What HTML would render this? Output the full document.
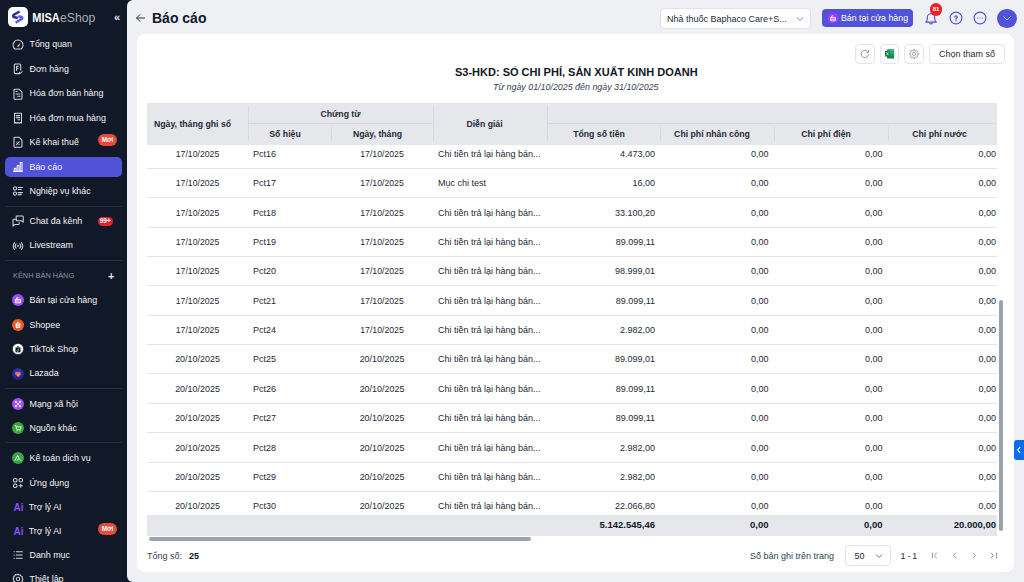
<!DOCTYPE html>
<html><head><meta charset="utf-8">
<style>
*{box-sizing:border-box;margin:0;padding:0}
html,body{width:1024px;height:582px;overflow:hidden;background:#111827;font-family:"Liberation Sans",sans-serif;}
.abs{position:absolute}
.t{position:absolute;white-space:nowrap}
#side{position:absolute;left:0;top:0;width:127px;height:582px;background:#111827;color:#f3f4f6}
#main{position:absolute;left:127px;top:0;width:897px;height:582px;background:#eef0f4;border-radius:6px 0 0 6px}
#card{position:absolute;left:137px;top:34px;width:877px;height:538px;background:#fff;border-radius:8px}
.nav{position:absolute;left:29.5px;font-size:8.9px;color:#f3f4f6;white-space:nowrap;line-height:10px}
.ico{position:absolute;left:12px;top:0}
.div{position:absolute;left:5px;width:117px;height:1px;background:#262d3d}
.badge{position:absolute;background:#e8453c;color:#fff;font-weight:bold;font-size:7px;border-radius:6px;text-align:center;line-height:10px}
.btn{position:absolute;top:44.2px;height:19.5px;border:1px solid #e3e5ea;border-radius:4px;background:#fff}
.th{position:absolute;font-size:8.7px;font-weight:bold;color:#1f2937;white-space:nowrap;line-height:10px;text-align:center}
.td{position:absolute;font-size:9px;color:#1f2937;white-space:nowrap;line-height:10px}
.r{text-align:right}
.vl{position:absolute;width:1px;background:#d6d9df}
.hl{position:absolute;height:1px;background:#e3e5e9}
</style></head>
<body>

<div id="side">
  <div class="abs" style="left:8px;top:7px;width:20px;height:20px;background:#fff;border-radius:5px"></div>
  <div class="abs" style="left:32.3px;top:11.7px;font-size:11px;font-weight:bold;color:#fff;line-height:13px;white-space:nowrap;transform:scaleY(1.1);transform-origin:0 70%">MISA<span style="font-weight:normal;color:#a9aeb8;font-size:12.2px;margin-left:.3px">eShop</span></div>
  <div class="abs" style="left:114px;top:10.5px;font-size:11px;color:#e5e7eb;font-weight:bold">«</div>
  <div class="abs" style="left:5px;top:157px;width:117px;height:19.5px;background:#5053d8;border-radius:5px"></div>
  <div class="nav" style="top:38.7px;">Tổng quan</div>
  <div class="nav" style="top:63.6px;">Đơn hàng</div>
  <div class="nav" style="top:87.8px;">Hóa đơn bán hàng</div>
  <div class="nav" style="top:112.6px;">Hóa đơn mua hàng</div>
  <div class="nav" style="top:136.5px;">Kê khai thuế</div>
  <div class="nav" style="top:161.5px;">Báo cáo</div>
  <div class="nav" style="top:185.5px;">Nghiệp vụ khác</div>
  <div class="nav" style="top:215.5px;">Chat đa kênh</div>
  <div class="nav" style="top:239.5px;">Livestream</div>
  <div class="nav" style="top:294.5px;">Bán tại cửa hàng</div>
  <div class="nav" style="top:319.5px;">Shopee</div>
  <div class="nav" style="top:343.5px;">TikTok Shop</div>
  <div class="nav" style="top:367.9px;">Lazada</div>
  <div class="nav" style="top:398.5px;">Mạng xã hội</div>
  <div class="nav" style="top:422.5px;">Nguồn khác</div>
  <div class="nav" style="top:452.5px;">Kế toán dịch vụ</div>
  <div class="nav" style="top:477.5px;">Ứng dụng</div>
  <div class="nav" style="top:501.5px;left:28.7px;font-size:8.8px">Trợ lý AI</div>
  <div class="nav" style="top:525.5px;left:28.7px;font-size:8.8px">Trợ lý AI</div>
  <div class="nav" style="top:549.5px;">Danh mục</div>
  <div class="nav" style="top:573.5px;">Thiết lập</div>
  <svg class="abs" style="left:12px;top:39.0px" width="12" height="12" viewBox="0 0 12 12"><path d="M2.9 10 A5 5 0 1 1 9.1 10 Z" fill="none" stroke="#d1d5db" stroke-width="1.05" stroke-linecap="round" stroke-linejoin="round"/><path d="M4.8 7.6 L8.6 3.6 L7 7.8 Z" fill="#d1d5db"/></svg>
  <svg class="abs" style="left:12px;top:63.0px" width="12" height="12" viewBox="0 0 12 12"><path d="M7.5 10.6H3.3a1 1 0 0 1-1-1V2a1 1 0 0 1 1-1h4.4a1 1 0 0 1 1 1v5" fill="none" stroke="#d1d5db" stroke-width="1.05" stroke-linecap="round" stroke-linejoin="round"/><path d="M4.6 3.2v4.2M4.6 3.2h1.6M4.6 5.3h1.4" fill="none" stroke="#d1d5db" stroke-width="1.05" stroke-linecap="round" stroke-linejoin="round" stroke-width=".8"/><path d="M7.2 9.4l1.1 1.1 2-2" fill="none" stroke="#d1d5db" stroke-width="1.05" stroke-linecap="round" stroke-linejoin="round"/></svg>
  <svg class="abs" style="left:12px;top:87.7px" width="12" height="12" viewBox="0 0 12 12"><path d="M7 1.2H3a1 1 0 0 0-1 1v8a1 1 0 0 0 1 1h6a1 1 0 0 0 1-1V4.2Z" fill="none" stroke="#d1d5db" stroke-width="1.05" stroke-linecap="round" stroke-linejoin="round"/><path d="M4 3.5h1.2M4 6h4M5.5 8.3h2.5" fill="none" stroke="#d1d5db" stroke-width="1.05" stroke-linecap="round" stroke-linejoin="round"/></svg>
  <svg class="abs" style="left:12px;top:112.0px" width="12" height="12" viewBox="0 0 12 12"><path d="M2.5 1.2h7v10l-1.2-.7-1.1.7-1.2-.7-1.2.7-1.1-.7-1.2.7Z" fill="none" stroke="#d1d5db" stroke-width="1.05" stroke-linecap="round" stroke-linejoin="round"/><path d="M4.3 3.6h3.4M4.3 5.6h3.4M5.8 7.8h1.9" fill="none" stroke="#d1d5db" stroke-width="1.05" stroke-linecap="round" stroke-linejoin="round"/></svg>
  <svg class="abs" style="left:12px;top:136.0px" width="12" height="12" viewBox="0 0 12 12"><path d="M7 1.2H3a1 1 0 0 0-1 1v8a1 1 0 0 0 1 1h6a1 1 0 0 0 1-1V4.2Z" fill="none" stroke="#d1d5db" stroke-width="1.05" stroke-linecap="round" stroke-linejoin="round"/><path d="M4.6 8.6l2.6-2.8M4.8 6.2h.1M7 8.4h.1" fill="none" stroke="#d1d5db" stroke-width="1.05" stroke-linecap="round" stroke-linejoin="round"/></svg>
  <svg class="abs" style="left:12px;top:161.0px" width="12" height="12" viewBox="0 0 12 12"><path d="M1.6 10.3h8.8" fill="none" stroke="#fff" stroke-width="1.1" stroke-linecap="round"/><rect x="2.2" y="7.4" width="1.8" height="2.9" fill="none" stroke="#fff" stroke-width="1"/><rect x="5.2" y="4.6" width="1.8" height="5.7" fill="none" stroke="#fff" stroke-width="1"/><rect x="8.2" y="1.6" width="1.8" height="8.7" fill="none" stroke="#fff" stroke-width="1"/></svg>
  <svg class="abs" style="left:12px;top:185.0px" width="12" height="12" viewBox="0 0 12 12"><circle cx="3" cy="3.4" r="1.6" fill="none" stroke="#d1d5db" stroke-width="1.05" stroke-linecap="round" stroke-linejoin="round"/><circle cx="3" cy="8.6" r="1.6" fill="none" stroke="#d1d5db" stroke-width="1.05" stroke-linecap="round" stroke-linejoin="round"/><path d="M6.2 2.4h4.3M6.2 4.4h3M6.2 7.6h4.3M6.2 9.6h3" fill="none" stroke="#d1d5db" stroke-width="1.05" stroke-linecap="round" stroke-linejoin="round"/></svg>
  <svg class="abs" style="left:12px;top:215.0px" width="12" height="12" viewBox="0 0 12 12"><path d="M4.2 4.2H1.6a.6.6 0 0 0-.6.6v6.2l1.8-1.6h3.8a.6.6 0 0 0 .6-.6V7.6" fill="none" stroke="#d1d5db" stroke-width="1.05" stroke-linecap="round" stroke-linejoin="round"/><path d="M4.2 1h6.4a.6.6 0 0 1 .6.6v5.6l-1.6-1.4H4.8a.6.6 0 0 1-.6-.6Z" fill="none" stroke="#d1d5db" stroke-width="1.05" stroke-linecap="round" stroke-linejoin="round"/></svg>
  <svg class="abs" style="left:12px;top:239.5px" width="12" height="12" viewBox="0 0 12 12"><circle cx="6" cy="6" r=".9" fill="#d1d5db"/><path d="M4.1 3.9a3 3 0 0 0 0 4.2M7.9 3.9a3 3 0 0 1 0 4.2M2.6 2.6a4.8 4.8 0 0 0 0 6.8M9.4 2.6a4.8 4.8 0 0 1 0 6.8" fill="none" stroke="#d1d5db" stroke-width="1.05" stroke-linecap="round" stroke-linejoin="round"/></svg>
  <svg class="abs" style="left:12px;top:294.0px" width="12" height="12" viewBox="0 0 12 12"><circle cx="6" cy="6" r="6" fill="#9b4dfa"/><path d="M3.4 5.4h5.2v3.4H3.4zM3.4 7h5.2M4.3 5.4l.5-1.6h1.6" fill="none" stroke="#fff" stroke-width=".9"/></svg>
  <svg class="abs" style="left:12px;top:319.0px" width="12" height="12" viewBox="0 0 12 12"><circle cx="6" cy="6" r="6" fill="#f05a28"/><path d="M3.5 4.6h5l-.4 4.4H3.9Z" fill="#fff"/><path d="M4.9 4.6a1.1 1.2 0 0 1 2.2 0" fill="none" stroke="#fff" stroke-width=".7"/><path d="M6.7 5.8c-.6-.4-1.5-.2-1.3.4.2.5 1.4.4 1.4 1.1 0 .6-1 .7-1.5.3" fill="none" stroke="#f05a28" stroke-width=".6"/></svg>
  <svg class="abs" style="left:12px;top:343.0px" width="12" height="12" viewBox="0 0 12 12"><circle cx="6" cy="6" r="5.6" fill="#fff" stroke="#111" stroke-width=".6"/><path d="M3.5 4.5h5v4.8h-5z" fill="#111"/><path d="M5 4.5a1 1 0 0 1 2 0" fill="none" stroke="#111" stroke-width=".8"/><path d="M6.4 5.4v2.4a.8.8 0 1 1-.8-.8" fill="none" stroke="#6ee7e7" stroke-width=".7"/></svg>
  <svg class="abs" style="left:12px;top:368.0px" width="12" height="12" viewBox="0 0 12 12"><defs><radialGradient id="lz" cx=".5" cy=".4" r=".6"><stop offset="0" stop-color="#3b3fb8"/><stop offset="1" stop-color="#1a237e"/></radialGradient></defs><circle cx="6" cy="6" r="6" fill="url(#lz)"/><path d="M6 8.8L3.3 6.2a1.5 1.5 0 0 1 2.7-1.6 1.5 1.5 0 0 1 2.7 1.6Z" fill="#f7568e"/><path d="M6 8.8L4.6 7.2 6 5.6l2.7.6Z" fill="#ff9a3c"/></svg>
  <svg class="abs" style="left:12px;top:398.0px" width="12" height="12" viewBox="0 0 12 12"><circle cx="6" cy="6" r="6" fill="#a44cf6"/><path d="M3.8 3.8l4.4 4.4M8.2 3.8l-4.4 4.4" stroke="#fff" stroke-width=".8"/><circle cx="3.8" cy="3.8" r="1" fill="#fff"/><circle cx="8.2" cy="3.8" r="1" fill="#fff"/><circle cx="3.8" cy="8.2" r="1" fill="#fff"/><circle cx="8.2" cy="8.2" r="1" fill="#fff"/></svg>
  <svg class="abs" style="left:12px;top:422.0px" width="12" height="12" viewBox="0 0 12 12"><circle cx="6" cy="6" r="6" fill="#38a838"/><path d="M3 3.6h.9l.8 4h3.6l.7-2.8H4.3" fill="none" stroke="#fff" stroke-width=".8" stroke-linejoin="round"/><circle cx="5" cy="8.8" r=".5" fill="#fff"/><circle cx="8" cy="8.8" r=".5" fill="#fff"/></svg>
  <svg class="abs" style="left:12px;top:452.0px" width="12" height="12" viewBox="0 0 12 12"><circle cx="6" cy="6" r="6" fill="#35a843"/><path d="M2.8 8.6L5.6 3.4l1.4 2.6M5 8.6l1.8-2.2 2.2 2.2" fill="none" stroke="#fff" stroke-width="1" stroke-linejoin="round"/></svg>
  <svg class="abs" style="left:12px;top:476.7px" width="12" height="12" viewBox="0 0 12 12"><rect x="1.5" y="1.5" width="3.5" height="3.5" rx="1.5" fill="none" stroke="#d1d5db" stroke-width="1.05" stroke-linecap="round" stroke-linejoin="round"/><rect x="7" y="1.5" width="3.5" height="3.5" rx="1.5" fill="none" stroke="#d1d5db" stroke-width="1.05" stroke-linecap="round" stroke-linejoin="round"/><rect x="1.5" y="7" width="3.5" height="3.5" rx="1.5" fill="none" stroke="#d1d5db" stroke-width="1.05" stroke-linecap="round" stroke-linejoin="round"/><path d="M8.75 7.2v3.1M7.2 8.75h3.1" fill="none" stroke="#d1d5db" stroke-width="1.05" stroke-linecap="round" stroke-linejoin="round"/></svg>
  <svg class="abs" style="left:12px;top:500.6px" width="14" height="12" viewBox="0 0 12 12"><defs><linearGradient id="aig" x1="0" y1="0" x2="1" y2="1"><stop offset="0" stop-color="#9a4cf8"/><stop offset="1" stop-color="#6a5af2"/></linearGradient></defs><text x=".6" y="9.9" font-family="Liberation Sans" font-weight="bold" font-size="10" fill="url(#aig)">Ai</text></svg>
  <svg class="abs" style="left:12px;top:525.0px" width="14" height="12" viewBox="0 0 12 12"><defs><linearGradient id="aig2" x1="0" y1="0" x2="1" y2="1"><stop offset="0" stop-color="#9a4cf8"/><stop offset="1" stop-color="#6a5af2"/></linearGradient></defs><text x=".6" y="9.9" font-family="Liberation Sans" font-weight="bold" font-size="10" fill="url(#aig2)">Ai</text></svg>
  <svg class="abs" style="left:12px;top:549.4px" width="12" height="12" viewBox="0 0 12 12"><path d="M2 2.8h.3M2 6h.3M2 9.2h.3M4.3 2.8h6M4.3 6h6M4.3 9.2h6" fill="none" stroke="#d1d5db" stroke-width="1.05" stroke-linecap="round" stroke-linejoin="round" stroke-width="1.2"/></svg>
  <svg class="abs" style="left:12px;top:573.0px" width="12" height="12" viewBox="0 0 12 12"><path d="M6 1.2l1.1.8 1.4-.1.6 1.2 1.2.7-.1 1.4.8 1.1-.8 1.1.1 1.4-1.2.7-.6 1.2-1.4-.1L6 10.8l-1.1-.8-1.4.1-.6-1.2-1.2-.7.1-1.4L1 6l.8-1.1-.1-1.4 1.2-.7.6-1.2 1.4.1Z" fill="none" stroke="#d1d5db" stroke-width="1.05" stroke-linecap="round" stroke-linejoin="round"/><circle cx="6" cy="6" r="1.7" fill="none" stroke="#d1d5db" stroke-width="1.05" stroke-linecap="round" stroke-linejoin="round"/></svg>
  <svg class="abs" style="left:6px;top:5px" width="24" height="24" viewBox="0 0 24 24"><path d="M13.6 6.5 L8 9.6 Q7 10.2 7.2 11.2 L7.6 12 L11.8 13" fill="none" stroke="#2e2f94" stroke-width="2.5" stroke-linejoin="round"/><path d="M12.2 11.2 L15.6 12 Q16.8 12.6 16 13.6 L9.6 17.8" fill="none" stroke="#5a5fe8" stroke-width="2.5" stroke-linejoin="round"/></svg>

  <div class="badge" style="left:97.7px;top:133.8px;width:19.6px;height:12.2px;line-height:12.2px;border-radius:6.1px;font-size:6.4px;background:#e84b3c">Mới</div>
  <div class="badge" style="left:97.7px;top:217.4px;width:15px;height:8.8px;line-height:8.8px;font-size:6.5px;background:#e3222f">99+</div>
  <div class="badge" style="left:97.7px;top:522.8px;width:19.6px;height:12.2px;line-height:12.2px;border-radius:6.1px;font-size:6.4px;background:#e84b3c">Mới</div>
  <div class="div" style="top:206px"></div>
  <div class="div" style="top:260px"></div>
  <div class="div" style="top:388px"></div>
  <div class="div" style="top:442px"></div>
  <div class="nav" style="top:271px;left:13px;font-size:7.4px;color:#8b93a5">KÊNH BÁN HÀNG</div>
  <div class="nav" style="top:270.6px;left:108px;font-size:11px;font-weight:bold;color:#e5e7eb">+</div>
</div>

<div id="main"></div>

<svg class="abs" style="left:135px;top:13px" width="11" height="10" viewBox="0 0 11 10"><path d="M9.5 5H1.8M5 1.6L1.6 5L5 8.4" fill="none" stroke="#1f2937" stroke-width=".95" stroke-linecap="round" stroke-linejoin="round"/></svg>
<div class="t" style="left:152px;top:9.8px;font-size:14px;font-weight:bold;color:#111827;line-height:16px">Báo cáo</div>
<div class="abs" style="left:660px;top:8px;width:151px;height:20.5px;background:#fff;border:1px solid #dfe2e8;border-radius:4px"></div>
<div class="t" style="left:667px;top:13.5px;font-size:9px;color:#1f2937;line-height:10px">Nhà thuốc Baphaco Care+S...</div>
<svg class="abs" style="left:795.5px;top:15.6px" width="8" height="6" viewBox="0 0 8 6"><path d="M1 1.5L4 4.5L7 1.5" fill="none" stroke="#6b7280" stroke-width=".9"/></svg>
<div class="abs" style="left:822px;top:9px;width:91px;height:18px;background:#5053d8;border-radius:4px"></div>
<svg class="abs" style="left:826.5px;top:12px" width="12" height="12" viewBox="0 0 12 12"><circle cx="6" cy="6" r="5.6" fill="#9d3cf6"/><path d="M3.6 5.6h4.8v3.2H3.6zM3.6 7.2h4.8" fill="none" stroke="#fff" stroke-width=".85"/><path d="M4.4 5.6l.4-1.7h1.5" fill="none" stroke="#fff" stroke-width=".85"/></svg>
<div class="t" style="left:841px;top:13px;font-size:8.8px;color:#fff;line-height:10px">Bán tại cửa hàng</div>


<svg class="abs" style="left:923px;top:9px" width="16" height="18" viewBox="0 0 16 18"><path d="M2.8 13.1 Q4.3 12.1 4.3 9.9 V8.4 a3.7 3.7 0 0 1 7.4 0 V9.9 Q11.7 12.1 13.2 13.1 Z" fill="none" stroke="#5053d8" stroke-width="1.15" stroke-linejoin="round"/><path d="M6.5 13.4 a1.5 1.5 0 0 0 3 0" fill="none" stroke="#5053d8" stroke-width="1.1"/></svg>
<div class="abs" style="left:929.8px;top:3.4px;width:12.6px;height:12.6px;border-radius:7px;background:#f01d25;color:#fff;font-size:6.2px;font-weight:bold;text-align:center;line-height:12.6px">81</div>
<svg class="abs" style="left:948.5px;top:11.3px" width="14" height="14" viewBox="0 0 14 14"><circle cx="7" cy="7" r="5.9" fill="none" stroke="#5053d8" stroke-width="1.15"/><path d="M5.85 6.0a1.2 1.2 0 1 1 1.85 1.05c-.45.25-.7.5-.7.95v.2" fill="none" stroke="#5053d8" stroke-width="1.3" stroke-linecap="round"/><circle cx="7" cy="9.7" r=".7" fill="#5053d8"/></svg>
<svg class="abs" style="left:973px;top:11.3px" width="14" height="14" viewBox="0 0 14 14"><circle cx="7" cy="7" r="5.9" fill="none" stroke="#5053d8" stroke-width="1.15"/><circle cx="4.55" cy="7" r=".55" fill="#5053d8"/><circle cx="7" cy="7" r=".55" fill="#5053d8"/><circle cx="9.45" cy="7" r=".55" fill="#5053d8"/></svg>
<div class="abs" style="left:997px;top:8.5px;width:19.5px;height:19.5px;border-radius:10px;background:#5053d8"></div>
<svg class="abs" style="left:1001px;top:13px" width="12" height="10" viewBox="0 0 12 10"><path d="M2.5 3.6L6 7L9.5 3.6" fill="none" stroke="#c9cbf3" stroke-width=".85" stroke-linecap="round"/></svg>

<div id="card"></div>

<div class="btn" style="left:855.3px;width:19.4px"></div>
<div class="btn" style="left:879.8px;width:19.4px"></div>
<div class="btn" style="left:904.3px;width:19.4px"></div>
<svg class="abs" style="left:859px;top:48px" width="12" height="12" viewBox="0 0 12 12"><path d="M9.6 6.3A3.7 3.7 0 1 1 8.4 3.2" fill="none" stroke="#8a909c" stroke-width=".95"/><path d="M9.6 1.9V4.3H7.3" fill="none" stroke="#8a909c" stroke-width="1" stroke-linejoin="round"/></svg>
<svg class="abs" style="left:884px;top:48px" width="12" height="12" viewBox="0 0 12 12"><defs><linearGradient id="xg" x1="0" y1="0" x2="0" y2="1"><stop offset="0" stop-color="#33c481"/><stop offset="0.5" stop-color="#21a366"/><stop offset="1" stop-color="#107c41"/></linearGradient></defs><rect x="3" y="1" width="7.2" height="9.4" rx=".6" fill="url(#xg)"/><rect x="1" y="2.8" width="5" height="5.8" rx=".5" fill="#107c41"/><path d="M2.4 4.2l2.2 3.1M4.6 4.2L2.4 7.3" stroke="#fff" stroke-width=".7"/></svg>
<svg class="abs" style="left:908px;top:48px" width="12" height="12" viewBox="0 0 12 12"><path d="M9.42 5.24 L10.67 5.44 L10.67 6.56 L9.42 6.76 L8.96 7.88 L9.70 8.90 L8.90 9.70 L7.88 8.96 L6.76 9.42 L6.56 10.67 L5.44 10.67 L5.24 9.42 L4.12 8.96 L3.10 9.70 L2.30 8.90 L3.04 7.88 L2.58 6.76 L1.33 6.56 L1.33 5.44 L2.58 5.24 L3.04 4.12 L2.30 3.10 L3.10 2.30 L4.12 3.04 L5.24 2.58 L5.44 1.33 L6.56 1.33 L6.76 2.58 L7.88 3.04 L8.90 2.30 L9.70 3.10 L8.96 4.12Z" fill="none" stroke="#8d939e" stroke-width=".8" stroke-linejoin="round"/><circle cx="6" cy="6" r="1.5" fill="none" stroke="#8d939e" stroke-width=".8"/></svg>
<div class="btn" style="left:929px;width:75.5px"></div>
<div class="t" style="left:939px;top:49px;font-size:9px;color:#1f2937;line-height:10px">Chọn tham số</div>
<div class="t" style="left:455px;top:65.5px;font-size:11px;font-weight:bold;color:#111827;line-height:13px">S3-HKD: SỔ CHI PHÍ, SẢN XUẤT KINH DOANH</div>
<div class="t" style="left:493px;top:81.8px;font-size:8.9px;font-style:italic;color:#374151;line-height:10px">Từ ngày 01/10/2025 đến ngày 31/10/2025</div>

<div class="td" style="left:147px;width:101px;top:149.00px;text-align:center;font-size:8.7px">17/10/2025</div>
<div class="td" style="left:253px;top:149.00px">Pct16</div>
<div class="td" style="left:331px;width:102px;top:149.00px;text-align:center;font-size:8.7px">17/10/2025</div>
<div class="td" style="left:438px;top:149.00px">Chi tiền trả lại hàng bán...</div>
<div class="td r" style="left:546.5px;width:108.5px;top:149.00px">4.473,00</div>
<div class="td r" style="left:659.5px;width:109.0px;top:149.00px">0,00</div>
<div class="td r" style="left:773.5px;width:109.0px;top:149.00px">0,00</div>
<div class="td r" style="left:887.5px;width:108.5px;top:149.00px">0,00</div>
<div class="hl" style="left:147px;width:850px;top:168.00px"></div>
<div class="td" style="left:147px;width:101px;top:178.35px;text-align:center;font-size:8.7px">17/10/2025</div>
<div class="td" style="left:253px;top:178.35px">Pct17</div>
<div class="td" style="left:331px;width:102px;top:178.35px;text-align:center;font-size:8.7px">17/10/2025</div>
<div class="td" style="left:438px;top:178.35px">Mục chi test</div>
<div class="td r" style="left:546.5px;width:108.5px;top:178.35px">16,00</div>
<div class="td r" style="left:659.5px;width:109.0px;top:178.35px">0,00</div>
<div class="td r" style="left:773.5px;width:109.0px;top:178.35px">0,00</div>
<div class="td r" style="left:887.5px;width:108.5px;top:178.35px">0,00</div>
<div class="hl" style="left:147px;width:850px;top:197.35px"></div>
<div class="td" style="left:147px;width:101px;top:207.70px;text-align:center;font-size:8.7px">17/10/2025</div>
<div class="td" style="left:253px;top:207.70px">Pct18</div>
<div class="td" style="left:331px;width:102px;top:207.70px;text-align:center;font-size:8.7px">17/10/2025</div>
<div class="td" style="left:438px;top:207.70px">Chi tiền trả lại hàng bán...</div>
<div class="td r" style="left:546.5px;width:108.5px;top:207.70px">33.100,20</div>
<div class="td r" style="left:659.5px;width:109.0px;top:207.70px">0,00</div>
<div class="td r" style="left:773.5px;width:109.0px;top:207.70px">0,00</div>
<div class="td r" style="left:887.5px;width:108.5px;top:207.70px">0,00</div>
<div class="hl" style="left:147px;width:850px;top:226.70px"></div>
<div class="td" style="left:147px;width:101px;top:237.05px;text-align:center;font-size:8.7px">17/10/2025</div>
<div class="td" style="left:253px;top:237.05px">Pct19</div>
<div class="td" style="left:331px;width:102px;top:237.05px;text-align:center;font-size:8.7px">17/10/2025</div>
<div class="td" style="left:438px;top:237.05px">Chi tiền trả lại hàng bán...</div>
<div class="td r" style="left:546.5px;width:108.5px;top:237.05px">89.099,11</div>
<div class="td r" style="left:659.5px;width:109.0px;top:237.05px">0,00</div>
<div class="td r" style="left:773.5px;width:109.0px;top:237.05px">0,00</div>
<div class="td r" style="left:887.5px;width:108.5px;top:237.05px">0,00</div>
<div class="hl" style="left:147px;width:850px;top:256.05px"></div>
<div class="td" style="left:147px;width:101px;top:266.40px;text-align:center;font-size:8.7px">17/10/2025</div>
<div class="td" style="left:253px;top:266.40px">Pct20</div>
<div class="td" style="left:331px;width:102px;top:266.40px;text-align:center;font-size:8.7px">17/10/2025</div>
<div class="td" style="left:438px;top:266.40px">Chi tiền trả lại hàng bán...</div>
<div class="td r" style="left:546.5px;width:108.5px;top:266.40px">98.999,01</div>
<div class="td r" style="left:659.5px;width:109.0px;top:266.40px">0,00</div>
<div class="td r" style="left:773.5px;width:109.0px;top:266.40px">0,00</div>
<div class="td r" style="left:887.5px;width:108.5px;top:266.40px">0,00</div>
<div class="hl" style="left:147px;width:850px;top:285.40px"></div>
<div class="td" style="left:147px;width:101px;top:295.75px;text-align:center;font-size:8.7px">17/10/2025</div>
<div class="td" style="left:253px;top:295.75px">Pct21</div>
<div class="td" style="left:331px;width:102px;top:295.75px;text-align:center;font-size:8.7px">17/10/2025</div>
<div class="td" style="left:438px;top:295.75px">Chi tiền trả lại hàng bán...</div>
<div class="td r" style="left:546.5px;width:108.5px;top:295.75px">89.099,11</div>
<div class="td r" style="left:659.5px;width:109.0px;top:295.75px">0,00</div>
<div class="td r" style="left:773.5px;width:109.0px;top:295.75px">0,00</div>
<div class="td r" style="left:887.5px;width:108.5px;top:295.75px">0,00</div>
<div class="hl" style="left:147px;width:850px;top:314.75px"></div>
<div class="td" style="left:147px;width:101px;top:325.10px;text-align:center;font-size:8.7px">17/10/2025</div>
<div class="td" style="left:253px;top:325.10px">Pct24</div>
<div class="td" style="left:331px;width:102px;top:325.10px;text-align:center;font-size:8.7px">17/10/2025</div>
<div class="td" style="left:438px;top:325.10px">Chi tiền trả lại hàng bán...</div>
<div class="td r" style="left:546.5px;width:108.5px;top:325.10px">2.982,00</div>
<div class="td r" style="left:659.5px;width:109.0px;top:325.10px">0,00</div>
<div class="td r" style="left:773.5px;width:109.0px;top:325.10px">0,00</div>
<div class="td r" style="left:887.5px;width:108.5px;top:325.10px">0,00</div>
<div class="hl" style="left:147px;width:850px;top:344.10px"></div>
<div class="td" style="left:147px;width:101px;top:354.45px;text-align:center;font-size:8.95px">20/10/2025</div>
<div class="td" style="left:253px;top:354.45px">Pct25</div>
<div class="td" style="left:331px;width:102px;top:354.45px;text-align:center;font-size:8.95px">20/10/2025</div>
<div class="td" style="left:438px;top:354.45px">Chi tiền trả lại hàng bán...</div>
<div class="td r" style="left:546.5px;width:108.5px;top:354.45px">89.099,01</div>
<div class="td r" style="left:659.5px;width:109.0px;top:354.45px">0,00</div>
<div class="td r" style="left:773.5px;width:109.0px;top:354.45px">0,00</div>
<div class="td r" style="left:887.5px;width:108.5px;top:354.45px">0,00</div>
<div class="hl" style="left:147px;width:850px;top:373.45px"></div>
<div class="td" style="left:147px;width:101px;top:383.80px;text-align:center;font-size:8.95px">20/10/2025</div>
<div class="td" style="left:253px;top:383.80px">Pct26</div>
<div class="td" style="left:331px;width:102px;top:383.80px;text-align:center;font-size:8.95px">20/10/2025</div>
<div class="td" style="left:438px;top:383.80px">Chi tiền trả lại hàng bán...</div>
<div class="td r" style="left:546.5px;width:108.5px;top:383.80px">89.099,11</div>
<div class="td r" style="left:659.5px;width:109.0px;top:383.80px">0,00</div>
<div class="td r" style="left:773.5px;width:109.0px;top:383.80px">0,00</div>
<div class="td r" style="left:887.5px;width:108.5px;top:383.80px">0,00</div>
<div class="hl" style="left:147px;width:850px;top:402.80px"></div>
<div class="td" style="left:147px;width:101px;top:413.15px;text-align:center;font-size:8.95px">20/10/2025</div>
<div class="td" style="left:253px;top:413.15px">Pct27</div>
<div class="td" style="left:331px;width:102px;top:413.15px;text-align:center;font-size:8.95px">20/10/2025</div>
<div class="td" style="left:438px;top:413.15px">Chi tiền trả lại hàng bán...</div>
<div class="td r" style="left:546.5px;width:108.5px;top:413.15px">89.099,11</div>
<div class="td r" style="left:659.5px;width:109.0px;top:413.15px">0,00</div>
<div class="td r" style="left:773.5px;width:109.0px;top:413.15px">0,00</div>
<div class="td r" style="left:887.5px;width:108.5px;top:413.15px">0,00</div>
<div class="hl" style="left:147px;width:850px;top:432.15px"></div>
<div class="td" style="left:147px;width:101px;top:442.50px;text-align:center;font-size:8.95px">20/10/2025</div>
<div class="td" style="left:253px;top:442.50px">Pct28</div>
<div class="td" style="left:331px;width:102px;top:442.50px;text-align:center;font-size:8.95px">20/10/2025</div>
<div class="td" style="left:438px;top:442.50px">Chi tiền trả lại hàng bán...</div>
<div class="td r" style="left:546.5px;width:108.5px;top:442.50px">2.982,00</div>
<div class="td r" style="left:659.5px;width:109.0px;top:442.50px">0,00</div>
<div class="td r" style="left:773.5px;width:109.0px;top:442.50px">0,00</div>
<div class="td r" style="left:887.5px;width:108.5px;top:442.50px">0,00</div>
<div class="hl" style="left:147px;width:850px;top:461.50px"></div>
<div class="td" style="left:147px;width:101px;top:471.85px;text-align:center;font-size:8.95px">20/10/2025</div>
<div class="td" style="left:253px;top:471.85px">Pct29</div>
<div class="td" style="left:331px;width:102px;top:471.85px;text-align:center;font-size:8.95px">20/10/2025</div>
<div class="td" style="left:438px;top:471.85px">Chi tiền trả lại hàng bán...</div>
<div class="td r" style="left:546.5px;width:108.5px;top:471.85px">2.982,00</div>
<div class="td r" style="left:659.5px;width:109.0px;top:471.85px">0,00</div>
<div class="td r" style="left:773.5px;width:109.0px;top:471.85px">0,00</div>
<div class="td r" style="left:887.5px;width:108.5px;top:471.85px">0,00</div>
<div class="hl" style="left:147px;width:850px;top:490.85px"></div>
<div class="td" style="left:147px;width:101px;top:501.20px;text-align:center;font-size:8.95px">20/10/2025</div>
<div class="td" style="left:253px;top:501.20px">Pct30</div>
<div class="td" style="left:331px;width:102px;top:501.20px;text-align:center;font-size:8.95px">20/10/2025</div>
<div class="td" style="left:438px;top:501.20px">Chi tiền trả lại hàng bán...</div>
<div class="td r" style="left:546.5px;width:108.5px;top:501.20px">22.066,80</div>
<div class="td r" style="left:659.5px;width:109.0px;top:501.20px">0,00</div>
<div class="td r" style="left:773.5px;width:109.0px;top:501.20px">0,00</div>
<div class="td r" style="left:887.5px;width:108.5px;top:501.20px">0,00</div>
<div class="abs" style="left:147px;top:103px;width:850px;height:42px;background:#e5e7eb"></div>
<div class="abs" style="left:248px;top:123px;width:185px;height:1px;background:#d6d9df"></div>
<div class="abs" style="left:547px;top:123px;width:450px;height:1px;background:#d6d9df"></div>
<div class="vl" style="left:248px;top:106px;height:35px"></div>
<div class="vl" style="left:433px;top:106px;height:35px"></div>
<div class="vl" style="left:546.5px;top:106px;height:35px"></div>
<div class="vl" style="left:331px;top:127px;height:14px"></div>
<div class="vl" style="left:659.5px;top:127px;height:14px"></div>
<div class="vl" style="left:773.5px;top:127px;height:14px"></div>
<div class="vl" style="left:887.5px;top:127px;height:14px"></div>
<div class="th" style="left:147px;width:91px;top:119px">Ngày, tháng ghi sổ</div>
<div class="th" style="left:248px;width:185px;top:108.5px">Chứng từ</div>
<div class="th" style="left:248px;width:74px;top:129px">Số hiệu</div>
<div class="th" style="left:331px;width:93px;top:129px">Ngày, tháng</div>
<div class="th" style="left:433px;width:103px;top:119px">Diễn giải</div>
<div class="th" style="left:547px;width:104px;top:129px">Tổng số tiền</div>
<div class="th" style="left:660px;width:104px;top:129px">Chi phí nhân công</div>
<div class="th" style="left:774px;width:104px;top:129px">Chi phí điện</div>
<div class="th" style="left:887.5px;width:104px;top:129px">Chi phí nước</div>
<div class="abs" style="left:147px;top:515px;width:850px;height:21px;background:#e5e7eb"></div>
<div class="td r" style="left:546.5px;width:108.5px;top:520.3px;font-weight:bold;font-size:9.5px;color:#111827">5.142.545,46</div>
<div class="td r" style="left:659.5px;width:109.0px;top:520.3px;font-weight:bold;font-size:9.5px;color:#111827">0,00</div>
<div class="td r" style="left:773.5px;width:109.0px;top:520.3px;font-weight:bold;font-size:9.5px;color:#111827">0,00</div>
<div class="td r" style="left:887.5px;width:108.5px;top:520.3px;font-weight:bold;font-size:9.5px;color:#111827">20.000,00</div>
<div class="abs" style="left:149px;top:537px;width:382px;height:4px;border-radius:2px;background:#9ca3af"></div>
<div class="abs" style="left:999px;top:299.5px;width:3.5px;height:231px;border-radius:2px;background:#9ca3af"></div>
<div class="t" style="left:147px;top:550.5px;font-size:9px;color:#374151;line-height:10px">Tổng số:</div>
<div class="t" style="left:189px;top:550.5px;font-size:9px;font-weight:bold;color:#111827;line-height:10px">25</div>
<div class="t" style="left:750px;top:550.5px;font-size:9px;color:#374151;line-height:10px">Số bản ghi trên trang</div>
<div class="abs" style="left:845px;top:544.8px;width:45.7px;height:21px;border:1px solid #e0e3e8;border-radius:4px"></div>
<div class="t" style="left:854.5px;top:550.5px;font-size:9px;color:#1f2937;line-height:10px">50</div>
<svg class="abs" style="left:875.3px;top:552.5px" width="8" height="6" viewBox="0 0 8 6"><path d="M1 1.5L4 4.5L7 1.5" fill="none" stroke="#6b7280" stroke-width="1"/></svg>
<div class="t" style="left:900.5px;top:550.5px;font-size:8.9px;color:#1f2937;line-height:10px;letter-spacing:-.25px">1 - 1</div>
<svg class="abs" style="left:930px;top:551px" width="70" height="9" viewBox="0 0 70 9">
<path d="M2.4 1.9V7.2M6.6 1.9L4.3 4.55L6.6 7.2M25.6 2L23.4 4.5L25.6 7M43.2 2L45.4 4.5L43.2 7M61.2 2L63.4 4.5L61.2 7M66.6 1.9V7.2" fill="none" stroke="#8a909b" stroke-width=".95" stroke-linecap="round" stroke-linejoin="round"/></svg>
<div class="abs" style="left:1014px;top:440px;width:10px;height:20px;background:#0b6cf0;border-radius:3px 0 0 3px"></div>
<svg class="abs" style="left:1015px;top:446px" width="8" height="8" viewBox="0 0 8 8"><path d="M5.2 1.2L2.6 4L5.2 6.8" fill="none" stroke="#fff" stroke-width="1.1"/></svg>
</body></html>
